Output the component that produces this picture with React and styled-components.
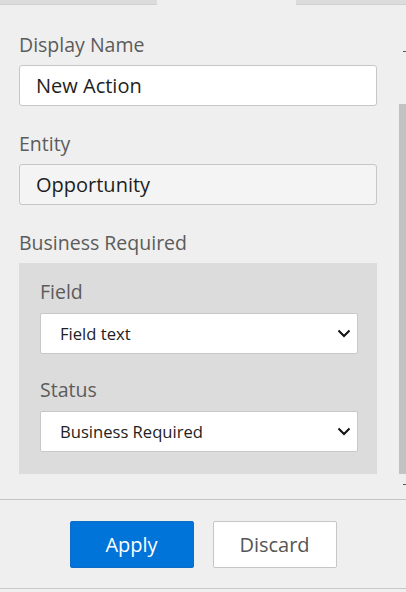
import styled, { createGlobalStyle } from "styled-components";

const GlobalStyle = createGlobalStyle`
  html, body {
    margin: 0;
    padding: 0;
    background: #efefef;
  }
  body {
    font-family: "Open Sans", "Noto Sans", sans-serif;
  }
`;

const Chevron = () => (
  <svg width="14" height="9" viewBox="0 0 14 9">
    <path d="M1.5 1.5 L7 7 L12.5 1.5" fill="none" stroke="#111" strokeWidth="2" />
  </svg>
);

const App = () => {
  return (
    <>
      <GlobalStyle />
      <Page>
        <TabStrip>
          <Tab />
          <Tab $active />
          <Tab $grow />
        </TabStrip>
        <Body>
          <Form>
            <Group>
              <Label>Display Name</Label>
              <TextBox>New Action</TextBox>
            </Group>
            <Group>
              <Label>Entity</Label>
              <TextBox $readOnly>Opportunity</TextBox>
            </Group>
            <Group>
              <Label>Business Required</Label>
              <Panel>
                <Group $inner>
                  <Label>Field</Label>
                  <Select>
                    <span>Field text</span>
                    <Chevron />
                  </Select>
                </Group>
                <Group $inner>
                  <Label>Status</Label>
                  <Select>
                    <span>Business Required</span>
                    <Chevron />
                  </Select>
                </Group>
              </Panel>
            </Group>
          </Form>
          <Scrollbar>
            <Arrow />
            <Track>
              <Thumb />
            </Track>
            <Arrow />
          </Scrollbar>
        </Body>
        <Footer>
          <Button $primary>Apply</Button>
          <Button>Discard</Button>
        </Footer>
      </Page>
    </>
  );
};

const Page = styled.div`
  height: 592px;
  display: flex;
  flex-direction: column;
  overflow: hidden;
`;

const TabStrip = styled.div`
  display: flex;
  height: 5px;
  flex: none;
`;

const Tab = styled.div`
  width: ${(p) => (p.$active ? "139px" : "157px")};
  flex: ${(p) => (p.$grow ? 1 : "none")};
  background: ${(p) => (p.$active ? "#efefef" : "#dcdcdc")};
  border-bottom: 1px solid ${(p) => (p.$active ? "transparent" : "#d0d0d0")};
`;

const Body = styled.div`
  display: flex;
  height: 494px;
  flex: none;
`;

const Form = styled.div`
  flex: 1;
  padding: 28px 22px 0 19px;
  display: flex;
  flex-direction: column;
  gap: 26px;
`;

const Group = styled.div`
  display: flex;
  flex-direction: column;
  gap: ${(p) => (p.$inner ? "9px" : "8px")};
`;

const Label = styled.div`
  font-size: 19.5px;
  line-height: 24px;
  color: #5b5b5b;
`;

const TextBox = styled.div`
  height: 41px;
  box-sizing: border-box;
  padding: 0 16px;
  display: flex;
  align-items: center;
  font-size: 20px;
  color: #1e1e1e;
  background: ${(p) => (p.$readOnly ? "#f4f4f4" : "#ffffff")};
  border: 1px solid #c6c6c6;
  border-radius: 3px;
`;

const Panel = styled.div`
  background: #dcdcdc;
  padding: 17px 19px 22px 21px;
  display: flex;
  flex-direction: column;
  gap: 24px;
`;

const Select = styled.div`
  height: 41px;
  box-sizing: border-box;
  padding: 0 6px 0 19px;
  display: flex;
  align-items: center;
  justify-content: space-between;
  font-size: 16.6px;
  color: #222;
  background: #fff;
  border: 1px solid #c8c8c8;
  border-radius: 2px;
`;

const Scrollbar = styled.div`
  width: 7px;
  display: flex;
  flex-direction: column;
  align-items: center;
  padding: 46px 0 14px;
  gap: 8px;
`;

const Arrow = styled.div`
  width: 3px;
  height: 1px;
  background: #555;
  align-self: flex-end;
`;

const Track = styled.div`
  flex: 1;
  width: 100%;
  display: flex;
  flex-direction: column;
  padding: 44px 0 2px;
`;

const Thumb = styled.div`
  flex: 1;
  background: #c2c2c2;
`;

const Footer = styled.div`
  flex: none;
  border-top: 1px solid #c4c4c4;
  border-bottom: 1px solid #c8c8c8;
  height: 88px;
  display: flex;
  justify-content: center;
  align-items: center;
  gap: 19px;
`;

const Button = styled.button`
  width: 124px;
  height: 47px;
  font-family: inherit;
  font-size: 20px;
  border-radius: 2px;
  cursor: pointer;
  color: ${(p) => (p.$primary ? "#ffffff" : "#555")};
  background: ${(p) => (p.$primary ? "#0074d9" : "#ffffff")};
  border: 1px solid ${(p) => (p.$primary ? "#0f6cc4" : "#c6c6c6")};
`;

export default App;
